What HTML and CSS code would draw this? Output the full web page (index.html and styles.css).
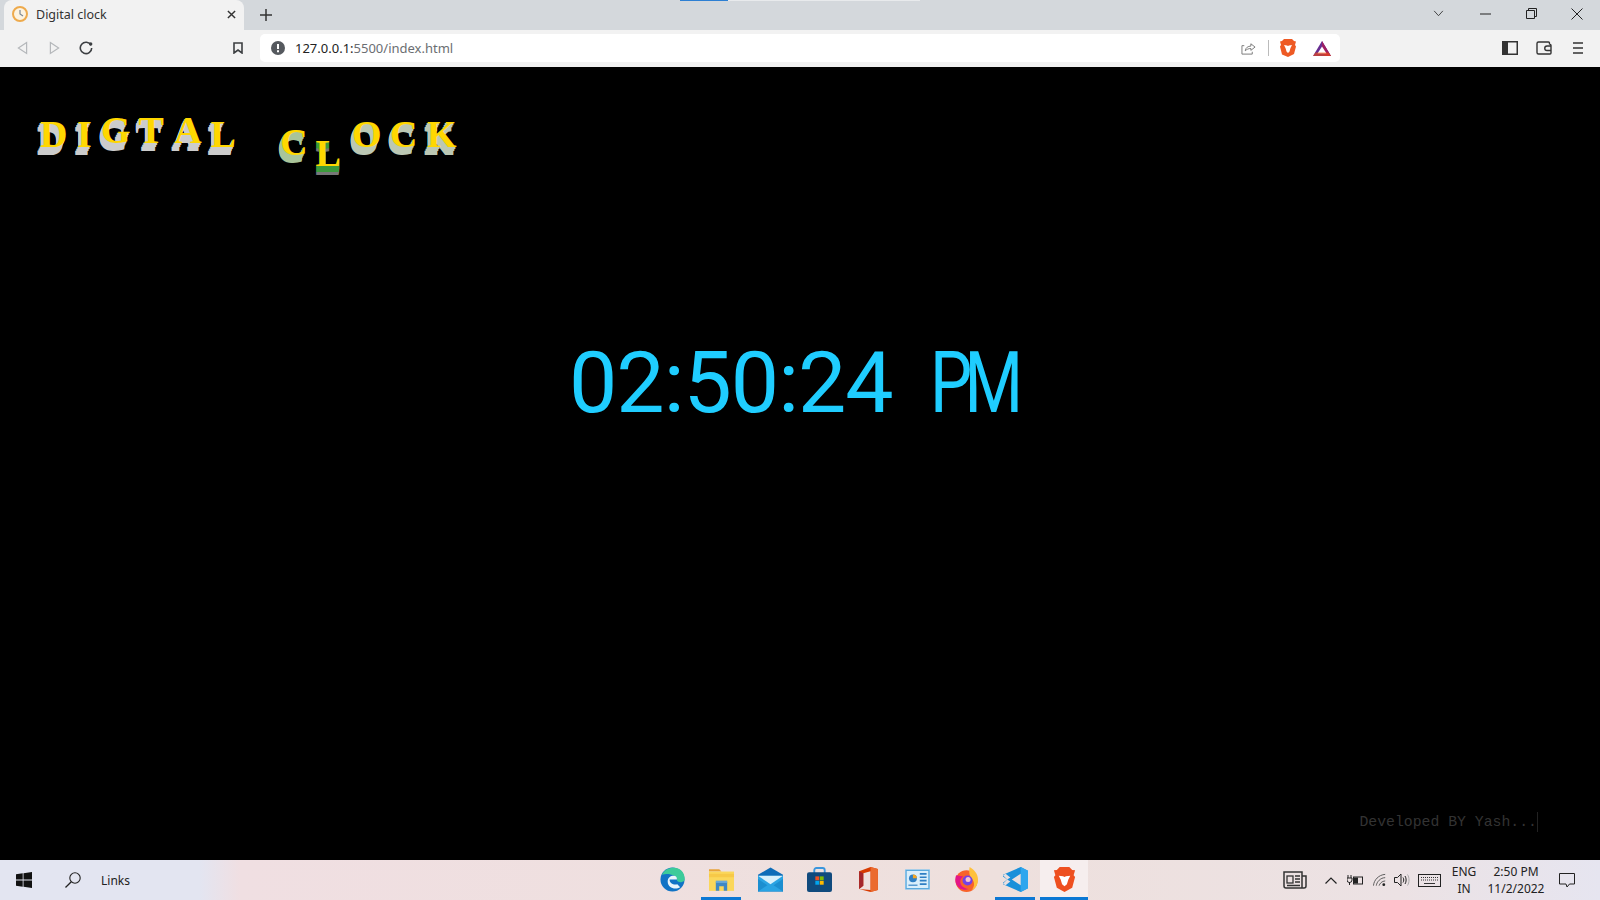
FILE: index.html
```html
<!DOCTYPE html>
<html lang="en">
<head>
    <meta charset="UTF-8">
    <title>Digital clock</title>
    <link rel="stylesheet" href="styles.css">
</head>
<body>
    <div class="tabstrip">
        <div class="tab">
            <svg class="favicon" viewBox="0 0 16 16"><circle cx="8" cy="8" r="7" fill="#fdf3e0" stroke="#eeaa4c" stroke-width="2"/><path d="M8 4v4l3 2" fill="none" stroke="#7b8794" stroke-width="1.2"/></svg>
            <span class="tab-title">Digital clock</span>
            <svg class="tab-close" viewBox="0 0 10 10"><path d="M1 1l8 8M9 1l-8 8" stroke="#333" stroke-width="1.6"/></svg>
        </div>
        <svg class="new-tab" viewBox="0 0 12 12"><path d="M6 0v12M0 6h12" stroke="#333" stroke-width="1.5"/></svg>
        <div class="progress"><span class="progress-done"></span><span class="progress-rest"></span></div>
        <div class="window-btns">
            <svg class="win-chevron" viewBox="0 0 12 8"><path d="M1 1l5 5.500 5-5.500" fill="none" stroke="#333"/></svg>
            <svg class="win-min" viewBox="0 0 11 2"><path d="M0 1h11" stroke="#222"/></svg>
            <svg class="win-restore" viewBox="0 0 11 11"><path d="M.5 2.500h8v8h-8zM2.500 2.500v-2h8v8h-2" fill="none" stroke="#222"/></svg>
            <svg class="win-close" viewBox="0 0 12 12"><path d="M.5.500l11 11M11.500.500l-11 11" stroke="#222"/></svg>
        </div>
    </div>

    <div class="toolbar">
        <svg class="tool tool-back" viewBox="0 0 12 14"><path d="M10.500 1L1.500 7l9 6z" fill="none" stroke="#b4b7ba" stroke-width="1.300"/></svg>
        <svg class="tool tool-forward" viewBox="0 0 12 14"><path d="M1.500 1l9 6-9 6z" fill="none" stroke="#b4b7ba" stroke-width="1.300"/></svg>
        <svg class="tool tool-reload" viewBox="0 0 14 14"><path d="M12 4.200A5.700 5.700 0 1 0 12.700 7" fill="none" stroke="#3c3f42" stroke-width="1.600"/><circle cx="11.700" cy="3" r="1.700" fill="#3c3f42"/></svg>
        <svg class="tool tool-mark" viewBox="0 0 10 12"><path d="M1 1h8v10L5 8l-4 3z" fill="none" stroke="#3c3f42" stroke-width="1.600"/></svg>
        <div class="urlbar">
            <svg class="url-info" viewBox="0 0 14 14"><circle cx="7" cy="7" r="7" fill="#55595e"/><path d="M6 3h2v5H6zM6 9.300h2v2H6z" fill="#fff"/></svg>
            <span class="url"><span class="url-host">127.0.0.1:</span>5500/index.html</span>
            <svg class="url-share" viewBox="0 0 16 14"><path d="M3.500 4.500H1v9h11v-2.500" fill="none" stroke="#777"/><path d="M4.500 10c.5-3.500 3-5 6-5V2.500L15 6l-4.500 3.500V7.500c-2.500 0-4.500 1-6 2.500z" fill="none" stroke="#777"/></svg>
            <span class="url-sep"></span>
            <svg class="url-brave" viewBox="0 0 16 18"><path d="M4 0h8l2 2 2 .5-1 3.500 1 1.500-2 7.500L8 18l-6-2.500L0 7.500 1 6 0 2.500 2 2z" fill="#ee5a24"/><path d="M4 6l3 .500 1 .500 1-.500 3-.500-1.500 3-1 3.500L8 14l-1.500-1.500-1-3.500z" fill="#fff"/></svg>
            <svg class="url-bat" viewBox="0 0 18 15"><path d="M9 0l9 15H0z" fill="#662d91"/><path d="M9 0l9 15H12L9 9.500z" fill="#9e1f63"/><path d="M9 5.500l4.500 7h-9z" fill="#fff"/><path d="M0 15l2.500-3.500h13L18 15z" fill="#ff5000" opacity=".55"/></svg>
        </div>
        <div class="toolbar-end">
            <svg class="tool-sidebar" viewBox="0 0 16 14"><rect x=".75" y=".75" width="14.500" height="12.500" fill="none" stroke="#333" stroke-width="1.500"/><rect x="1" y="1" width="5" height="12" fill="#333"/></svg>
            <svg class="tool-wallet" viewBox="0 0 16 14"><path d="M13.500 3.500V2a1 1 0 0 0-1-1H2.500A1.500 1.500 0 0 0 1 2.500v9A1.500 1.500 0 0 0 2.500 13H14a1 1 0 0 0 1-1V9.500M15 4.500V5h-4a2 2 0 0 0 0 4.500h4V4.500a1 1 0 0 0-1.500-1" fill="none" stroke="#333" stroke-width="1.400"/></svg>
            <svg class="tool-menu" viewBox="0 0 10 12"><path d="M0 1h10M0 6h10M0 11h10" stroke="#333" stroke-width="1.500"/></svg>
        </div>
    </div>

    <main class="page">
        <h1 class="title">
            <span class="letter l-d">D</span>
            <span class="letter l-i">I</span>
            <span class="letter l-g">G</span>
            <span class="letter l-t">T</span>
            <span class="letter l-a">A</span>
            <span class="letter l-l">L</span>
            <span class="letter l-c">C</span>
            <span class="letter l-l2">L</span>
            <span class="letter l-o">O</span>
            <span class="letter l-c2">C</span>
            <span class="letter l-k">K</span>
        </h1>
        <div class="clock">02:50:24 <span class="clock-ampm">PM</span></div>
        <div class="credit">Developed BY Yash...<span class="cursor"></span></div>
    </main>

    <footer class="taskbar">
        <svg class="start" viewBox="0 0 16 16"><path d="M0 2.300l6.700-1v6.200H0zM7.500 1.200L16 0v7.500H7.500zM0 8.500h6.700v6.200l-6.700-1zM7.500 8.500H16V16l-8.500-1.200z" fill="#111"/></svg>
        <svg class="search" viewBox="0 0 16 16"><circle cx="10" cy="6" r="5.200" fill="none" stroke="#222" stroke-width="1.100"/><path d="M6.300 9.700L.5 15.500" stroke="#222" stroke-width="1.300"/></svg>
        <span class="links">Links</span>

        <div class="apps">
            <div class="app">
                <svg viewBox="0 0 26 26"><circle cx="13" cy="13" r="12.500" fill="#1173c5"/><path d="M2 8C5 1 14-1 20 2c5 3 6 8 5.500 12-3 3-8 2-8-1 0-4-8-7-15.500-5z" fill="#3ccb9a"/><path d="M8 15c0-4 3-6 6-6s4 2 3.500 4H10c0 4 4 6 8 5l3 3c-5 3-13 1-13-6z" fill="#e8f4fb"/></svg>
            </div>
            <div class="app app-open">
                <svg viewBox="0 0 22 20"><path d="M0 1h9l2 2h-11z" fill="#e8a33a"/><rect y="3" width="22" height="17" fill="#fbd75b"/><rect y="5" width="22" height="3" fill="#f7c948"/><path d="M6 12h10v8h-3v-4H9v4H6z" fill="#3f88c5"/><rect x="6" y="11" width="10" height="2" fill="#6aa9d8"/></svg>
            </div>
            <div class="app">
                <svg viewBox="0 0 24 23"><path d="M12 0l12 7v16H0V7z" fill="#0e6cb8"/><rect x="0" y="8" width="24" height="15" fill="#29a3e3"/><path d="M0 8h24L12 16z" fill="#d8f0fb"/><path d="M0 23V11l9 6zM24 23V11l-9 6z" fill="#1b8ed0"/></svg>
            </div>
            <div class="app">
                <svg viewBox="0 0 24 24"><path d="M7 6V3a2 2 0 0 1 2-2h6a2 2 0 0 1 2 2v3" fill="none" stroke="#3a96dd" stroke-width="1.800"/><rect y="5" width="24" height="19" rx="2" fill="#104a7d"/><rect x="8" y="9" width="3.700" height="3.700" fill="#f25022"/><rect x="12.300" y="9" width="3.700" height="3.700" fill="#7fba00"/><rect x="8" y="13.300" width="3.700" height="3.700" fill="#00a4ef"/><rect x="12.300" y="13.300" width="3.700" height="3.700" fill="#ffb900"/></svg>
            </div>
            <div class="app">
                <svg viewBox="0 0 18 24"><path d="M0 4l11-4 7 2v20l-7 2-11-3 11 1V4L4 6v12l-4 3z" fill="#d83b01"/><path d="M11 0l7 2v20l-7 2z" fill="#eb6b2f"/><path d="M0 4l4 2v12l-4 3z" fill="#a4262c"/></svg>
            </div>
            <div class="app">
                <svg viewBox="0 0 22 18"><rect width="22" height="18" fill="#9fd0ef"/><rect x="1" y="1" width="20" height="16" fill="#d9eefb" stroke="#5aa8dc"/><circle cx="7" cy="8" r="3.500" fill="#2f7fc4"/><path d="M7 8V4.500A3.500 3.500 0 0 1 10.500 8z" fill="#f5a623"/><path d="M13 4h6M13 7h6M13 10h6M13 13h6" stroke="#2f7fc4" stroke-width="1.500"/><path d="M3 14h8" stroke="#2f7fc4"/></svg>
            </div>
            <div class="app">
                <svg viewBox="0 0 24 24"><circle cx="12" cy="13.500" r="10.500" fill="#f9622a"/><path d="M15 0c5 3 8 7 8 12 0 6-3 9-6 10 3-3 3-8 0-11-2-2-3-6-2-11z" fill="#ffc13b"/><path d="M2 8c-1 3-1 6 0 8 2 5 8 7 12 5-4 0-8-3-8-7 0-3 2-4 3-5z" fill="#e31587"/><circle cx="13" cy="13" r="4.800" fill="#7542e5"/><circle cx="13.500" cy="12" r="2.400" fill="#f9c1d0"/></svg>
            </div>
            <div class="app app-open">
                <svg viewBox="0 0 24 24"><path d="M17 0l7 3.500v17L17 24 0 16.500V15l4-3-4-3V7.500z" fill="#1a90da"/><path d="M17 0l7 3.500v17L17 24z" fill="#2ea6ee"/><path d="M17 6.500v11L8.500 12zM0 8l2.500-1.500L7 10 4 12zM0 16l2.500 1.500L7 14l-3-2z" fill="#eadfdf"/></svg>
            </div>
            <div class="app app-active">
                <svg viewBox="0 0 22 26"><path d="M6 0h10l3 3 3 .5-1.500 5 1.500 2-3 11-8 4.500-8-4.500-3-11 1.500-2L0 3.500 3 3z" fill="#ee4f1f"/><path d="M5 9l4.500 .5 1.500 1 1.500-1L17 9l-2 4-1.500 5-2.500 2-2.500-2L7 13z" fill="#fff"/></svg>
            </div>
        </div>

        <div class="tray">
            <svg class="tray-news" viewBox="0 0 24 18"><path d="M1 1h18v16H3a2 2 0 0 1-2-2zM19 5h4v10a2 2 0 0 1-2 2h-2" fill="none" stroke="#333" stroke-width="1.500"/><rect x="4" y="5" width="6" height="7" fill="none" stroke="#333" stroke-width="1.300"/><path d="M12 5h5M12 8h5M12 11h5M4 14.500h13" stroke="#333" stroke-width="1.300"/></svg>
            <svg class="tray-chevron" viewBox="0 0 12 7"><path d="M.5 6.500L6 1l5.500 5.500" fill="none" stroke="#222" stroke-width="1.200"/></svg>
            <svg class="tray-battery" viewBox="0 0 16 12"><path d="M1 1v3M4 1v3M0 4h5v2a2.500 2.500 0 0 1-5 0zM2.500 8v3" fill="none" stroke="#222"/><rect x="6.500" y="3" width="9" height="7" fill="none" stroke="#222"/><rect x="7" y="3.500" width="4" height="6" fill="#222"/></svg>
            <svg class="tray-wifi" viewBox="0 0 16 14"><path d="M.5 13C1 7 6 1.500 13 1M3.500 13C4 9 8 4.500 13 4.500M6.500 13c.5-2 3-5 6.500-5" fill="none" stroke="#555"/><circle cx="11.500" cy="12" r="1.500" fill="#222"/></svg>
            <svg class="tray-sound" viewBox="0 0 16 14"><path d="M.5 4.500h3L7 1v12L3.500 9.500h-3z" fill="none" stroke="#222"/><path d="M9 4.500c1 1.500 1 3.500 0 5M11 3c1.500 2 1.500 6 0 8" fill="none" stroke="#222"/><path d="M13.500 1.500c2 3 2 8 0 11" fill="none" stroke="#aaa"/></svg>
            <svg class="tray-keys" viewBox="0 0 23 13"><rect x=".5" y=".5" width="22" height="12" fill="none" stroke="#222"/><path d="M3 3.500h17M3 6h17" stroke="#333" stroke-dasharray="1 1"/><path d="M6 9.500h11" stroke="#333"/></svg>
            <div class="tray-lang"><span>ENG</span><span>IN</span></div>
            <div class="tray-clock"><span>2:50 PM</span><span>11/2/2022</span></div>
            <svg class="tray-notify" viewBox="0 0 16 15"><path d="M.5.500h15v10.500H10.500L8 14l-1-3H.5z" fill="none" stroke="#222"/></svg>
        </div>
    </footer>
</body>
</html>
```

FILE: styles.css
```css
* {
    box-sizing: border-box;
    margin: 0;
    padding: 0;
}

body {
    width: 1600px;
    height: 900px;
    overflow: hidden;
    display: flex;
    flex-direction: column;
    background: #000;
    font-family: "Noto Sans", "Open Sans", sans-serif;
}

svg {
    display: block;
    flex: none;
}

/* tab strip */
.tabstrip {
    height: 30px;
    display: flex;
    align-items: center;
    background: #d4d8dc;
    padding-left: 4px;
    position: relative;
}

.tab {
    width: 240px;
    height: 30px;
    display: flex;
    align-items: center;
    background: #f2f2f2;
    border-radius: 8px 8px 0 0;
    padding: 0 8px 2px 8px;
}

.favicon {
    width: 16px;
    height: 16px;
}

.tab-title {
    flex: 1;
    margin-left: 8px;
    font-size: 12.500px;
    color: #333;
}

.tab-close {
    width: 9px;
    height: 9px;
}

.new-tab {
    width: 12px;
    height: 12px;
    margin-left: 16px;
    margin-bottom: 1px;
}

.progress {
    position: absolute;
    top: 0;
    left: 680px;
    display: flex;
    height: 1px;
}

.progress-done {
    width: 48px;
    background: #2d7fd3;
}

.progress-rest {
    width: 192px;
    background: #e8eaec;
}

.window-btns {
    margin-left: auto;
    display: flex;
    align-items: center;
    padding: 0 17px 3px 0;
}

.win-chevron {
    width: 11px;
    height: 7px;
}

.win-min {
    width: 11px;
    height: 2px;
    margin-left: 36px;
}

.win-restore {
    width: 11px;
    height: 11px;
    margin-left: 35px;
}

.win-close {
    width: 12px;
    height: 12px;
    margin-left: 34px;
}

/* toolbar */
.toolbar {
    height: 37px;
    display: flex;
    align-items: center;
    background: #f2f2f2;
    padding: 0 17px 1px 17px;
}

.tool-back,
.tool-forward {
    width: 11px;
    height: 14px;
}

.tool-forward {
    margin-left: 21px;
}

.tool-reload {
    width: 14px;
    height: 14px;
    margin-left: 19px;
}

.tool-mark {
    width: 10px;
    height: 12px;
    margin-left: 140px;
}

.urlbar {
    width: 1080px;
    height: 28px;
    margin-left: 17px;
    display: flex;
    align-items: center;
    background: #fff;
    border-radius: 5px;
    padding: 0 9px 0 11px;
}

.url-info {
    width: 14px;
    height: 14px;
}

.url {
    flex: 1;
    margin-left: 10px;
    font-size: 13px;
    color: #6b6e72;
}

.url-host {
    color: #222;
}

.url-share {
    width: 15px;
    height: 14px;
}

.url-sep {
    width: 1px;
    height: 16px;
    margin-left: 12px;
    background: #bbb;
}

.url-brave {
    width: 16px;
    height: 18px;
    margin-left: 11px;
}

.url-bat {
    width: 18px;
    height: 15px;
    margin-left: 17px;
}

.toolbar-end {
    margin-left: auto;
    display: flex;
    align-items: center;
}

.tool-sidebar,
.tool-wallet {
    width: 16px;
    height: 14px;
}

.tool-wallet {
    margin-left: 18px;
}

.tool-menu {
    width: 10px;
    height: 12px;
    margin-left: 21px;
}

/* page */
.page {
    flex: 1;
    display: flex;
    flex-direction: column;
    background: #000;
}

.title {
    display: flex;
    align-items: flex-start;
    height: 120px;
    padding-left: 40px;
    font-family: "Liberation Serif", serif;
    font-size: 38px;
    line-height: 38px;
    font-weight: 700;
    color: #ffd700;
}

.letter {
    --depth: #ccc;
    display: block;
    margin-top: 48px;
    text-shadow:
        -1px 1px 0 var(--depth), -1px 2px 0 var(--depth),
        -2px 3px 0 var(--depth), -2px 4px 0 var(--depth),
        -3px 5px 0 var(--depth), -3px 6px 0 var(--depth),
        -3px 7px 0 var(--depth), -3px 8px 0 var(--depth);
}

.l-i { margin-left: 9.600px; }
.l-g { margin-left: 9.200px; margin-top: 44px; }
.l-t { margin-left: 8px; margin-top: 44px; }
.l-a { margin-left: 10.200px; margin-top: 44px; }
.l-l { margin-left: 9px; }
.l-c { --depth: #a9c49a; margin-left: 44.200px; margin-top: 56px; }
.l-l2 {
    margin-left: 8px;
    margin-top: 67px;
    text-shadow:
        0 1px 0 #3c9a3c, 0 2px 0 #3c9a3c, 0 3px 0 #3c9a3c, 0 4px 0 #3c9a3c,
        0 5px 0 #3c9a3c, 0 6px 0 #3c9a3c, 0 7px 0 #777, 0 8px 0 #777, 0 9px 0 #777;
}
.l-o { --depth: #bcc8b4; margin-left: 11px; }
.l-c2 { --depth: #bcc8b4; margin-left: 8.500px; }
.l-k { --depth: #bcc8b4; margin-left: 9.600px; }

.clock {
    margin-top: 146px;
    align-self: flex-start;
    margin-left: 569px;
    font-family: Roboto, "Liberation Sans", sans-serif;
    font-size: 86px;
    line-height: 100px;
    letter-spacing: -1px;
    color: #1fcdff;
    white-space: pre;
}

.clock-ampm {
    display: inline-block;
    margin-left: 17px;
    letter-spacing: -10px;
    transform: scaleX(0.78);
    transform-origin: left center;
}

.credit {
    margin-top: auto;
    margin-bottom: 28px;
    align-self: flex-end;
    margin-right: 62px;
    font-family: "Liberation Mono", monospace;
    font-size: 14.800px;
    line-height: 20px;
    color: #333;
}

.cursor {
    display: inline-block;
    height: 20px;
    vertical-align: bottom;
    border-right: 1px solid #222;
}

/* windows taskbar */
.taskbar {
    height: 40px;
    display: flex;
    align-items: center;
    background: linear-gradient(90deg, #e3e5f1 0, #e3e5f1 200px, #f0dfe2 240px, #eee0dd 1000px, #ece2e4 1400px, #e6e5f0 1600px);
    font-size: 12px;
    color: #222;
}

.start {
    width: 16px;
    height: 16px;
    margin-left: 16px;
}

.search {
    width: 16px;
    height: 16px;
    margin-left: 33px;
}

.links {
    margin-left: 20px;
    width: 32px;
}

.apps {
    display: flex;
    height: 40px;
    gap: 1px;
    margin-left: 515px;
}

.app {
    width: 48px;
    height: 40px;
    display: flex;
    align-items: center;
    justify-content: center;
    padding: 1px 0 3px;
}

.app svg {
    width: 25px;
    height: 25px;
}

.app-open {
    background: linear-gradient(#0b78d4, #0b78d4) center bottom / 40px 3px no-repeat;
}

.app-active {
    background: linear-gradient(#0b78d4, #0b78d4) center bottom / 100% 3px no-repeat, #f6eeee;
}

.tray {
    display: flex;
    align-items: center;
    margin-left: 195px;
}

.tray-news {
    width: 24px;
    height: 18px;
}

.tray-chevron {
    width: 12px;
    height: 7px;
    margin-left: 18px;
}

.tray-battery {
    width: 16px;
    height: 12px;
    margin-left: 10px;
}

.tray-wifi {
    width: 15px;
    height: 14px;
    margin-left: 10px;
}

.tray-sound {
    width: 16px;
    height: 14px;
    margin-left: 6px;
}

.tray-keys {
    width: 23px;
    height: 13px;
    margin-left: 8px;
}

.tray-lang,
.tray-clock {
    display: flex;
    flex-direction: column;
    align-items: center;
    line-height: 17px;
}

.tray-lang {
    width: 34px;
    margin-left: 6px;
}

.tray-clock {
    width: 60px;
    margin-left: 5px;
}

.tray-notify {
    width: 16px;
    height: 15px;
    margin-left: 13px;
}
```
